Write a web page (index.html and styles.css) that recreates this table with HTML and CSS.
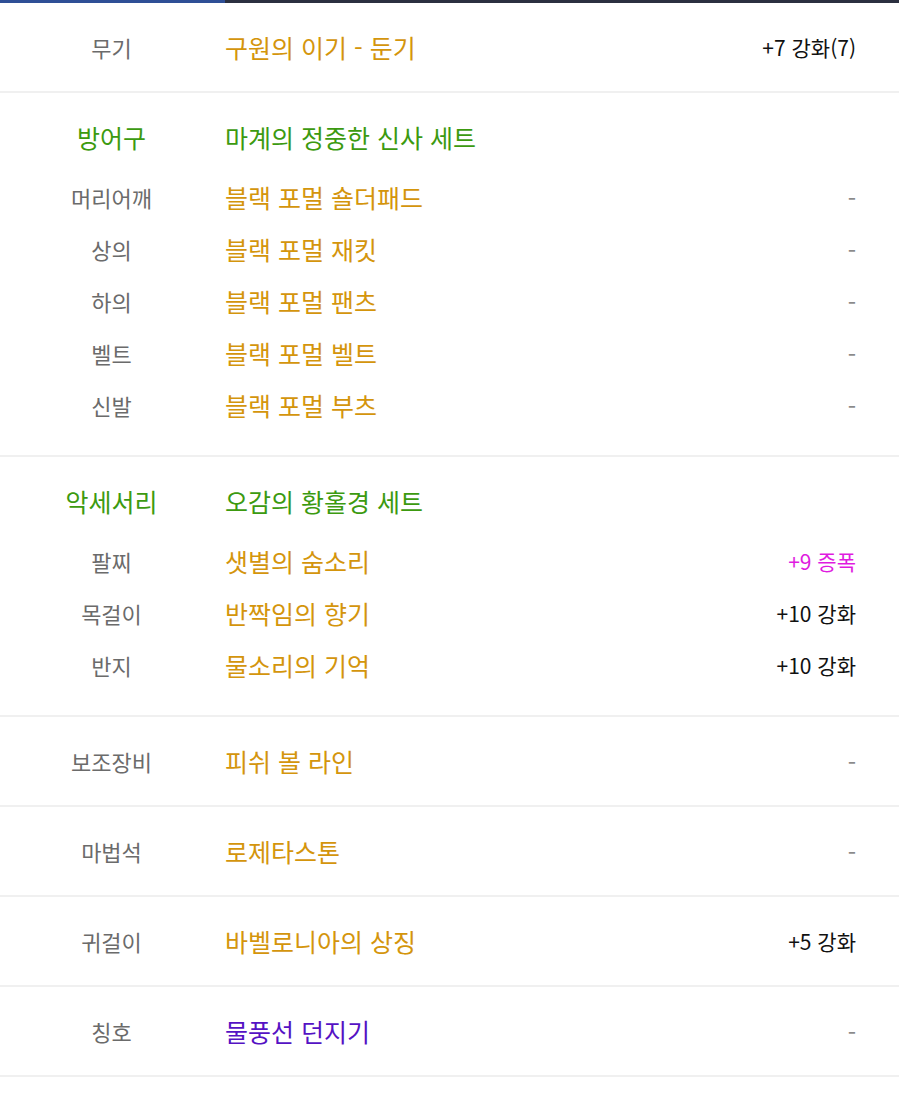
FILE: index.html
```html
<!DOCTYPE html>
<html lang="ko">
<head>
<meta charset="utf-8">
<link rel="stylesheet" href="styles.css">
</head>
<body>
<div class="topbar"><div class="topbar-active"></div></div>

<section class="group single">
  <div class="row">
    <div class="label">무기</div>
    <div class="name gold">구원의 이기 - 둔기</div>
    <div class="value">+7 강화(7)</div>
  </div>
</section>

<section class="group multi">
  <div class="row head">
    <div class="label green">방어구</div>
    <div class="name green">마계의 정중한 신사 세트</div>
    <div class="value"></div>
  </div>
  <div class="row">
    <div class="label">머리어깨</div>
    <div class="name gold">블랙 포멀 숄더패드</div>
    <div class="value dash">-</div>
  </div>
  <div class="row">
    <div class="label">상의</div>
    <div class="name gold">블랙 포멀 재킷</div>
    <div class="value dash">-</div>
  </div>
  <div class="row">
    <div class="label">하의</div>
    <div class="name gold">블랙 포멀 팬츠</div>
    <div class="value dash">-</div>
  </div>
  <div class="row">
    <div class="label">벨트</div>
    <div class="name gold">블랙 포멀 벨트</div>
    <div class="value dash">-</div>
  </div>
  <div class="row">
    <div class="label">신발</div>
    <div class="name gold">블랙 포멀 부츠</div>
    <div class="value dash">-</div>
  </div>
</section>

<section class="group multi">
  <div class="row head">
    <div class="label green">악세서리</div>
    <div class="name green">오감의 황홀경 세트</div>
    <div class="value"></div>
  </div>
  <div class="row">
    <div class="label">팔찌</div>
    <div class="name gold">샛별의 숨소리</div>
    <div class="value magenta">+9 증폭</div>
  </div>
  <div class="row">
    <div class="label">목걸이</div>
    <div class="name gold">반짝임의 향기</div>
    <div class="value">+10 강화</div>
  </div>
  <div class="row">
    <div class="label">반지</div>
    <div class="name gold">물소리의 기억</div>
    <div class="value">+10 강화</div>
  </div>
</section>

<section class="group single">
  <div class="row">
    <div class="label">보조장비</div>
    <div class="name gold">피쉬 볼 라인</div>
    <div class="value dash">-</div>
  </div>
</section>

<section class="group single">
  <div class="row">
    <div class="label">마법석</div>
    <div class="name gold">로제타스톤</div>
    <div class="value dash">-</div>
  </div>
</section>

<section class="group single">
  <div class="row">
    <div class="label">귀걸이</div>
    <div class="name gold">바벨로니아의 상징</div>
    <div class="value">+5 강화</div>
  </div>
</section>

<section class="group single">
  <div class="row">
    <div class="label">칭호</div>
    <div class="name purple">물풍선 던지기</div>
    <div class="value dash">-</div>
  </div>
</section>
</body>
</html>
```

FILE: styles.css
```css
html, body {
  margin: 0;
  padding: 0;
  background: #ffffff;
}
body {
  font-family: "Noto Sans CJK KR", "Noto Sans", sans-serif;
  width: 899px;
}
.topbar {
  height: 3px;
  background: #2b3040;
  display: flex;
}
.topbar-active {
  width: 225px;
  background: #2f4f96;
}
.group {
  border-bottom: 2px solid #f0f0f0;
}
.single .row {
  height: 88px;
}
.multi {
  padding: 18px 0 24px;
}
.multi .row {
  height: 52px;
}
.multi .row.head {
  margin-bottom: 8px;
}
.row {
  display: grid;
  grid-template-columns: 225px 1fr auto;
  align-items: center;
  padding-right: 43px;
}
.label {
  text-align: center;
  font-size: 22px;
  color: #6b6b6b;
  padding-right: 2px;
}
.name {
  font-size: 25px;
}
.value {
  font-size: 21px;
  color: #111111;
  text-align: right;
}
.value.dash {
  color: #8a8a8a;
  font-size: 24px;
}
.gold { color: #d4950c; }
.green { color: #3c9a10; }
.label.green { font-size: 25px; }
.purple { color: #5512c4; }
.magenta { color: #e01be0; }
```
